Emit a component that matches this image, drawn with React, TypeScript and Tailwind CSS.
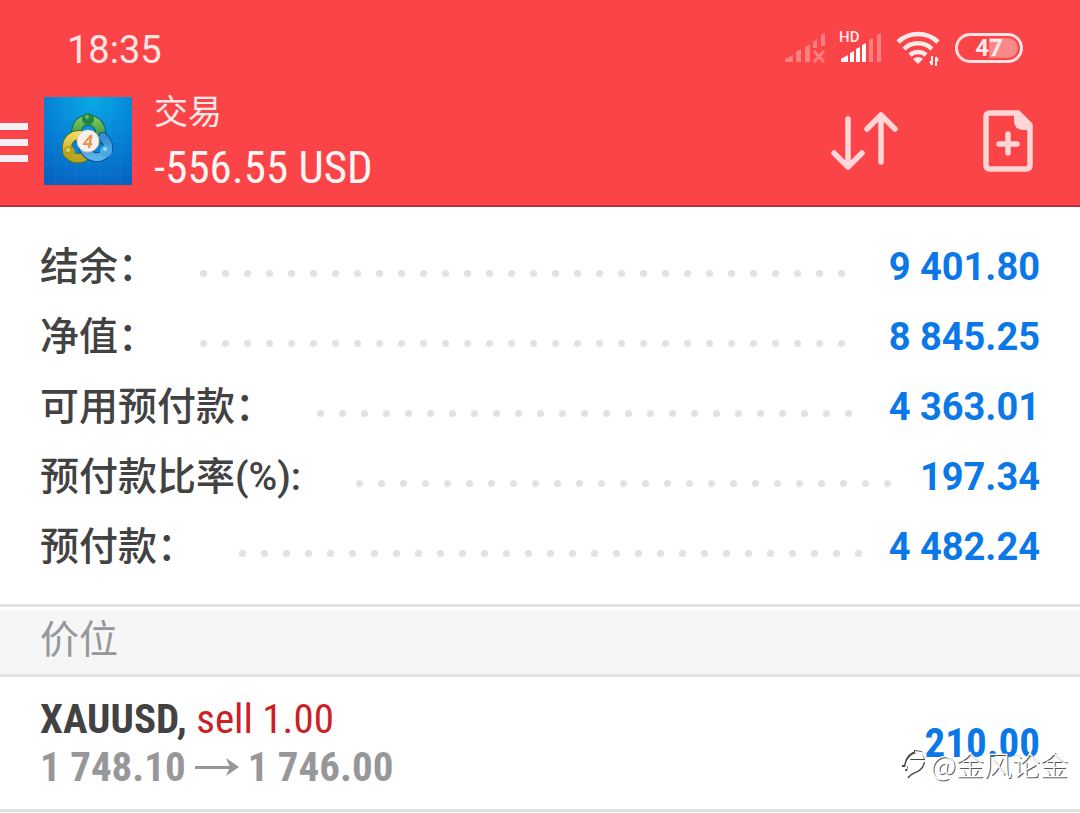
import clsx from "clsx";

interface SummaryRow {
  label: string;
  value: string;
  labelWidth: string;
}

const SUMMARY: SummaryRow[] = [
  { label: "结余：", value: "9 401.80", labelWidth: "w-[160px]" },
  { label: "净值：", value: "8 845.25", labelWidth: "w-[160px]" },
  { label: "可用预付款：", value: "4 363.01", labelWidth: "w-[277px]" },
  { label: "预付款比率(%):", value: "197.34", labelWidth: "w-[316px]" },
  { label: "预付款：", value: "4 482.24", labelWidth: "w-[199px]" },
];

const SANS = "font-[Roboto,'Noto_Sans_CJK_SC',sans-serif]";
const CONDENSED =
  "font-['Roboto_Condensed','Liberation_Sans_Narrow',Roboto,sans-serif]";

function SignalIcons() {
  return (
    <svg width="170" height="40" viewBox="0 0 170 40" fill="#ffeaea" aria-hidden="true">
      {/* empty SIM slot */}
      <g opacity="0.35">
        <path d="M0 34v-3l8-4v7zM11 34V24l5-3v13zM20 34V19l5-3v18zM28 20v-6l4-3v9zM36 18V7l4-2v13z" />
        <path d="M29 23l10 11M39 23l-10 11" stroke="#ffeaea" strokeWidth="3" />
      </g>
      {/* active SIM */}
      <path d="M56 34v-3l7-4v7zM65 34v-9l4-2v11zM71 34V21l4-2v15zM77 34V17l4-2v19z" fill="#fff" />
      <path d="M84 34V12l4-2v24zM92 34V7l4-2v29z" opacity="0.35" />
      <text x="54" y="14" fontSize="15" fontWeight="500" fontFamily="Roboto, sans-serif">
        HD
      </text>
      {/* wifi */}
      <g fill="none" stroke="#ffeaea" strokeWidth="4.5">
        <path d="M113 14a29 29 0 0 1 40 0" />
        <path d="M119 21a20 20 0 0 1 28 0" />
        <path d="M125 27a12 12 0 0 1 16 0" />
      </g>
      <path d="M133 36l-5-5a7 7 0 0 1 10 0z" />
      <path d="M147 28v9M145 33l2 4M151 38v-9M153 33l-2-4" stroke="#ffeaea" strokeWidth="2" fill="none" />
    </svg>
  );
}

function AppLogo() {
  return (
    <svg width="88" height="88" viewBox="0 0 88 88" role="img" aria-label="MetaTrader 4" className="shrink-0">
      <defs>
        <radialGradient id="sky" cx="0.55" cy="0.05" r="1">
          <stop offset="0" stopColor="#08a9e6" />
          <stop offset="0.5" stopColor="#0583d6" />
          <stop offset="1" stopColor="#0763c0" />
        </radialGradient>
        <linearGradient id="green" x1="0" y1="0" x2="0" y2="1">
          <stop offset="0" stopColor="#77c45a" />
          <stop offset="1" stopColor="#2d8b45" />
        </linearGradient>
        <linearGradient id="gold" x1="0" y1="0" x2="0" y2="1">
          <stop offset="0" stopColor="#f0d65a" />
          <stop offset="1" stopColor="#b9a41d" />
        </linearGradient>
        <linearGradient id="blue" x1="0" y1="0" x2="0" y2="1">
          <stop offset="0" stopColor="#2f8fd4" />
          <stop offset="1" stopColor="#5ab2e8" />
        </linearGradient>
      </defs>
      <rect width="88" height="88" fill="url(#sky)" />
      <path
        d="M11 0v88M22 0v88M33 0v88M44 0v88M55 0v88M66 0v88M77 0v88M0 11h88M0 22h88M0 33h88M0 44h88M0 55h88M0 66h88M0 77h88"
        stroke="#4ec0ee"
        strokeOpacity="0.12"
      />
      <g strokeLinecap="round" fill="none">
        <path d="M33 40c-2-12 4-17 11-17s15 6 12 19" stroke="#155d52" strokeWidth="11" />
        <path d="M33 40c-2-12 4-17 11-17s15 6 12 19" stroke="url(#green)" strokeWidth="9" />
        <path d="M37 38c-11-1-15 8-14 15 2 8 10 10 17 7" stroke="#566d20" strokeWidth="10" />
        <path d="M37 38c-11-1-15 8-14 15 2 8 10 10 17 7" stroke="url(#gold)" strokeWidth="8" />
        <path d="M59 40c6 6 7 12 2 17-7 6-17 3-21-5" stroke="#0c4c94" strokeWidth="10" />
        <path d="M59 40c6 6 7 12 2 17-7 6-17 3-21-5" stroke="url(#blue)" strokeWidth="8" />
      </g>
      <circle cx="44" cy="22" r="6" fill="#248344" />
      <circle cx="25" cy="55" r="6" fill="#b6a020" />
      <circle cx="62" cy="54" r="6" fill="#4aa8e4" />
      <circle cx="43" cy="20" r="2" fill="#6abb70" />
      <circle cx="24" cy="53" r="2" fill="#e3d267" />
      <circle cx="61" cy="52" r="2" fill="#9ad6f6" />
      <circle cx="44" cy="44" r="11" fill="#f6f1ec" stroke="#d4c9bb" />
      <text x="44" y="51" textAnchor="middle" fontSize="19" fontWeight="500" fontStyle="italic" fontFamily="Roboto, sans-serif" fill="#e98e46">
        4
      </text>
    </svg>
  );
}

function StatusBar() {
  return (
    <div className="flex h-[85px] items-center justify-between pt-[10px] pr-[57px] pl-[67px]">
      <span className="pt-1 text-[38px] leading-none text-[#ffe4e4]">18:35</span>
      <div className="flex items-center">
        <SignalIcons />
        <span className="flex h-[30px] w-[68px] items-center justify-center rounded-full border-[3px] border-[#ffe1e1] bg-linear-to-r from-transparent from-50% to-[#fc8787] to-50% bg-clip-content p-[2px] text-2xl leading-none font-bold text-[#ffeaea]">
          47
        </span>
      </div>
    </div>
  );
}

function Toolbar() {
  return (
    <div className="flex items-center pr-[46px] pb-2">
      <button type="button" aria-label="菜单" className="flex w-7 shrink-0 flex-col gap-[9px] pt-[2px]">
        <span className="h-[7px] bg-[#f7f0f7]" />
        <span className="h-[7px] bg-[#f7f0f7]" />
        <span className="h-[7px] bg-[#f7f0f7]" />
      </button>
      <div className="ml-4">
        <AppLogo />
      </div>
      <div className="ml-[22px] flex-1">
        <h1 className="text-[34px] leading-[54px] text-[#ffe8e8]">交易</h1>
        <p className={clsx(CONDENSED, "text-[45px] leading-[58px] text-[#fff5f5]")}>-556.55 USD</p>
      </div>
      <button type="button" aria-label="排序" className="mr-[84px]">
        <svg width="68" height="60" viewBox="0 0 68 60" fill="none" stroke="#ffd5d5" strokeWidth="5.5" strokeLinecap="round" strokeLinejoin="round">
          <path d="M17 8v48M3 42l14 14 14-14M50 51V4M36 18l14-14 14 14" />
        </svg>
      </button>
      <button type="button" aria-label="新订单">
        <svg width="51" height="62" viewBox="0 0 51 62" fill="none" stroke="#ffd5d5" strokeWidth="5.5" strokeLinejoin="round">
          <path d="M7 3h28l12 12v40q0 4-4 4H7q-4 0-4-4V7q0-4 4-4z" />
          <path d="M31 3h6l12 12v5h-8q-10 0-10-10z" fill="#ffd5d5" stroke="none" />
          <path d="M25 24v19M16 34h18" strokeLinecap="round" />
        </svg>
      </button>
    </div>
  );
}

function DotLeader() {
  return (
    <div className="mt-3 flex h-[7px] flex-1 flex-wrap gap-x-[15px] gap-y-2 overflow-hidden" aria-hidden="true">
      {Array.from({ length: 80 }, (_, i) => (
        <span key={i} className="size-[7px] rounded-full bg-[#e2e2e2]" />
      ))}
    </div>
  );
}

function Watermark() {
  return (
    <div className="absolute right-3 bottom-[27px] flex items-center gap-[2px] font-['Noto_Sans_CJK_SC',sans-serif] text-[28px] leading-9 font-light text-white [text-shadow:1px_1px_0_#555]">
      <svg width="28" height="32" viewBox="0 0 28 32" fill="none" aria-hidden="true">
        <path d="M1 18h3c1-8 5-13 12-14M6 12h7M6 18l-1 5M13 3l7 1c7 6 4 15-2 19-4 3-7 2-11 7M13 12h11" stroke="#444" strokeWidth="2" />
        <path d="M2 20h3c1-8 5-13 12-14M7 13h7M14 4l7 1c7 6 4 15-2 19-4 3-7 2-11 7M14 13h10" stroke="#fff" strokeWidth="2" />
      </svg>
      @金风论金
    </div>
  );
}

export default function App() {
  return (
    <div className={clsx(SANS, "bg-white text-[#424242]")}>
      <header className="border-b-2 border-[#b8323a] bg-[#fa4447]">
        <StatusBar />
        <Toolbar />
      </header>

      <dl className="border-b-[3px] border-[#e2e2e2] px-10 pt-[25px] pb-[22px]">
        {SUMMARY.map((row) => (
          <div key={row.label} className="flex h-[70px] items-center">
            <dt className={clsx("shrink-0 text-[39px] leading-none font-medium whitespace-nowrap", row.labelWidth)}>
              {row.label}
            </dt>
            <DotLeader />
            <dd className="ml-[22px] text-[38px] leading-none font-bold text-[#0b78e8]">{row.value}</dd>
          </div>
        ))}
      </dl>

      <h2 className="mt-[3px] border-b-[3px] border-[#e2e2e2] bg-[#f6f6f6] px-10 pb-1 text-[39px] leading-[60px] text-[#97979a]">
        价位
      </h2>

      <section className={clsx(CONDENSED, "relative flex items-center justify-between border-b-[3px] border-[#e2e2e2] px-10 py-[18px] text-[41px] leading-[48px]")}>
        <div>
          <p>
            <strong>XAUUSD,</strong> <span className="text-[#cb2026]">sell 1.00</span>
          </p>
          <p className="flex items-center font-bold text-[#97979a]">
            1 748.10
            <svg width="44" height="20" viewBox="0 0 44 20" className="mx-[9px]" role="img" aria-label="至">
              <path d="M0 9h36v3H0z" fill="currentColor" />
              <path d="M31 1l13 9-13 9 4-9z" fill="currentColor" />
            </svg>
            1 746.00
          </p>
        </div>
        <span className="font-bold text-[#0b78e8]">210.00</span>
        <Watermark />
      </section>
    </div>
  );
}
